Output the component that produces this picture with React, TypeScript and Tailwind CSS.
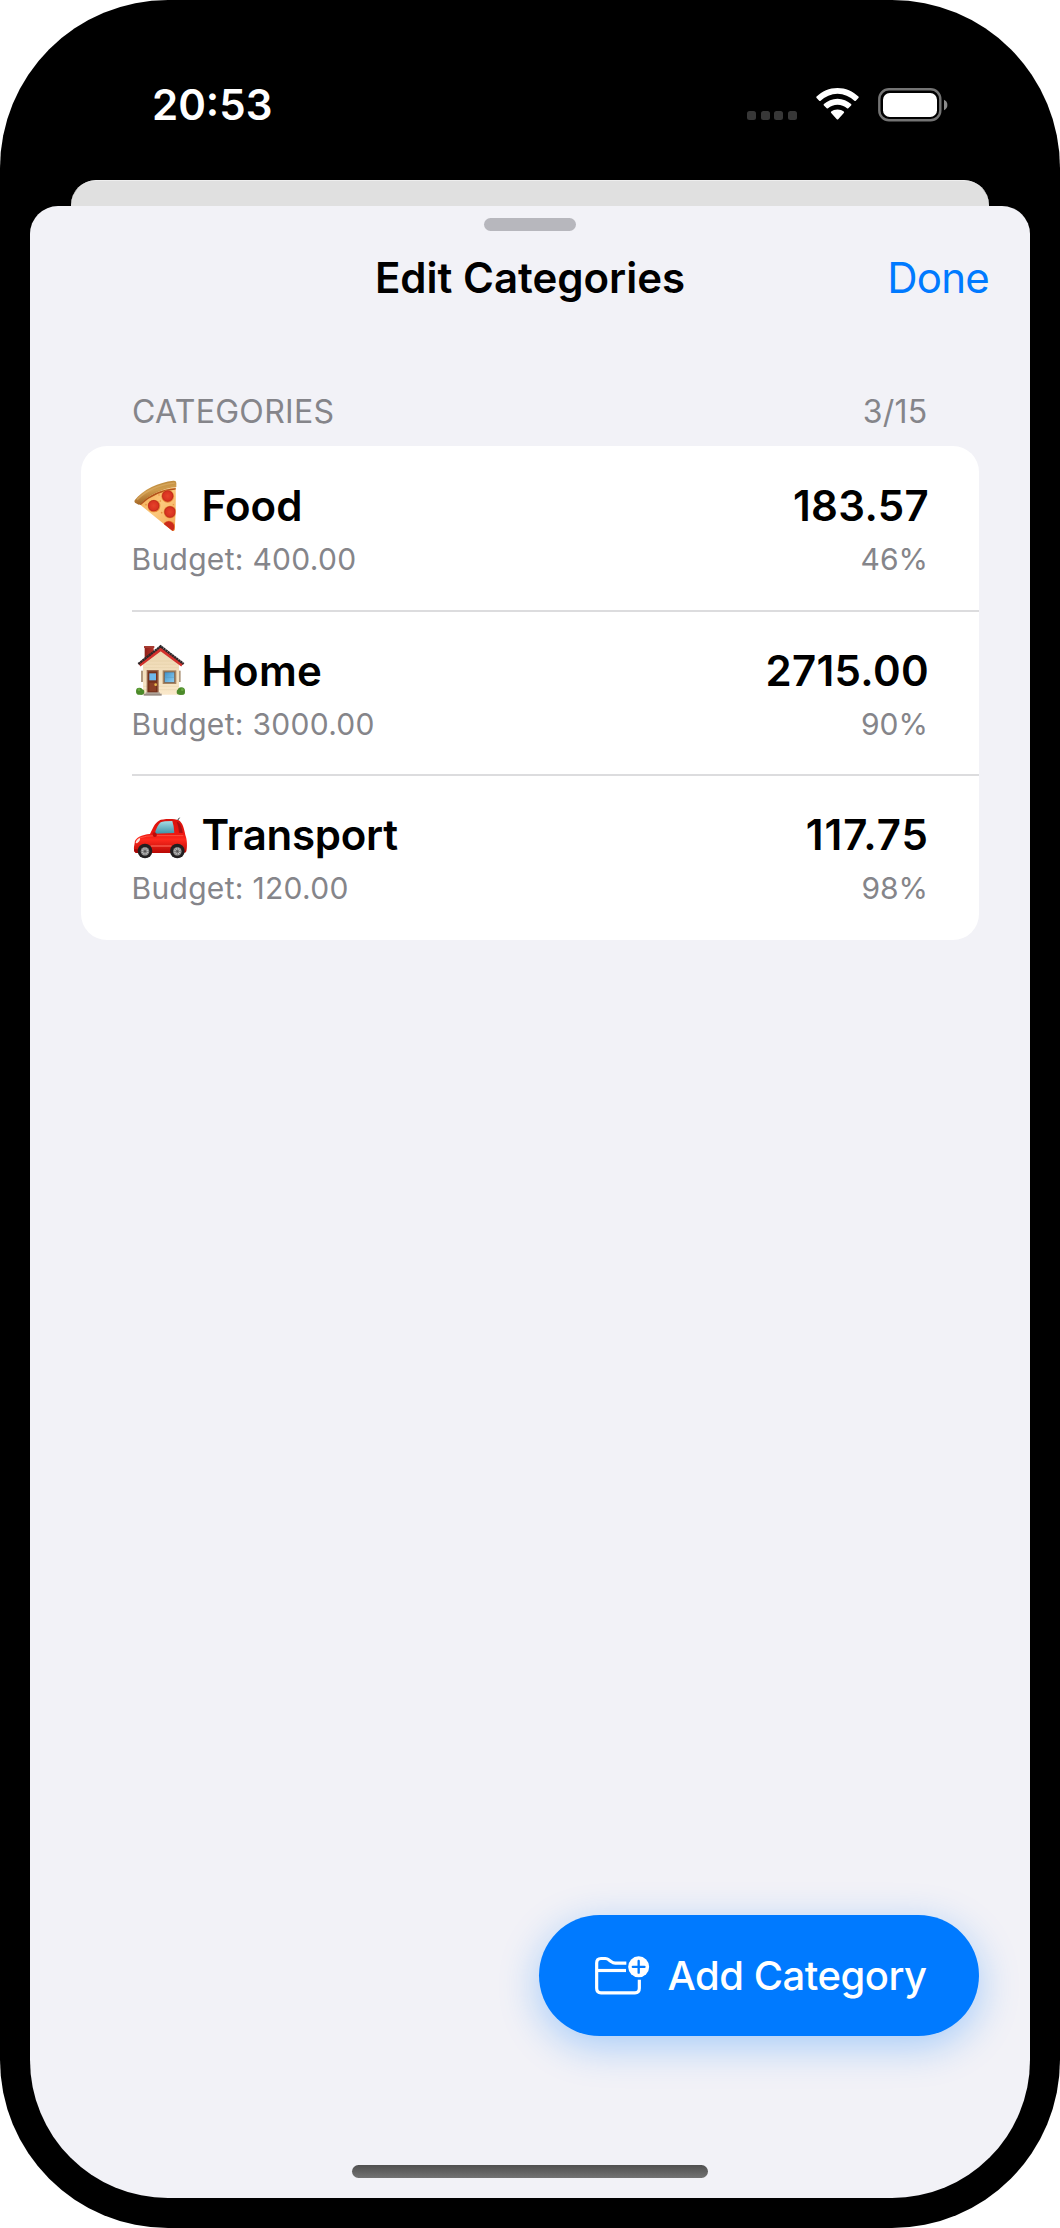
import type { ReactNode } from 'react';

function PizzaIcon() {
  return (
    <svg viewBox="36 24 162 162" className="h-[54px] w-[54px] shrink-0 overflow-visible" aria-hidden="true">
      <defs>
        <linearGradient id="crust" x1="0" y1="0" x2="0.35" y2="1">
          <stop offset="0" stopColor="#a8782c" />
          <stop offset="0.5" stopColor="#cf9b4c" />
          <stop offset="1" stopColor="#9a5a1c" />
        </linearGradient>
        <linearGradient id="cheese" x1="0" y1="0" x2="1" y2="1">
          <stop offset="0" stopColor="#f0a850" />
          <stop offset="0.5" stopColor="#fbc97c" />
          <stop offset="1" stopColor="#f4a656" />
        </linearGradient>
        <radialGradient id="pepperoni">
          <stop offset="0" stopColor="#e5432a" />
          <stop offset="0.75" stopColor="#d93321" />
          <stop offset="1" stopColor="#b5261a" />
        </radialGradient>
        <clipPath id="slice">
          <path d="M58 102C84 76 122 56 167 52C168 96 167 140 164 180Q161 186 155 181Q104 140 58 102Z" />
        </clipPath>
      </defs>
      <path d="M58 102C84 76 122 56 167 52C168 96 167 140 164 180Q161 186 155 181Q104 140 58 102Z" fill="url(#cheese)" />
      <g clipPath="url(#slice)">
        <path d="M60 104C86 78 124 60 170 56" fill="none" stroke="#b3531b" strokeWidth="5" />
        <circle cx="143" cy="79" r="19" fill="#e98435" />
        <circle cx="102" cy="108" r="19" fill="#e98435" />
        <circle cx="150" cy="126" r="19" fill="#e98435" />
        <circle cx="147" cy="171" r="19" fill="#e98435" />
        <circle cx="143" cy="78" r="17" fill="url(#pepperoni)" />
        <circle cx="101" cy="107" r="17" fill="url(#pepperoni)" />
        <circle cx="150" cy="126" r="17" fill="url(#pepperoni)" />
        <circle cx="146" cy="171" r="17" fill="#cb2a1b" />
        <g fill="#e5903e">
          <circle cx="78" cy="104" r="2.5" /><circle cx="121" cy="93" r="2.5" /><circle cx="125" cy="128" r="2.5" /><circle cx="160" cy="104" r="2" /><circle cx="117" cy="75" r="2.5" />
        </g>
      </g>
      <path d="M44 91C68 59 117 36 160 32Q169 31 169 39V51C126 56 86 75 62 102Q57 106 52 102L45 98Q42 95 44 91Z" fill="url(#crust)" />
      <path d="M51 89C79 61 116 44 164 39" fill="none" stroke="#ddb06a" strokeWidth="5" opacity=".6" />
    </svg>
  );
}

function HouseIcon() {
  return (
    <svg viewBox="36 24 162 162" className="h-[54px] w-[54px] shrink-0 overflow-visible" aria-hidden="true">
      <defs>
        <linearGradient id="wall" x1="0" y1="0" x2="0" y2="1">
          <stop offset="0" stopColor="#ecd7b1" />
          <stop offset="1" stopColor="#fae8ca" />
        </linearGradient>
        <linearGradient id="pane" x1="0" y1="0" x2="1" y2="1">
          <stop offset="0" stopColor="#3d8fc8" />
          <stop offset="1" stopColor="#8fd0f4" />
        </linearGradient>
        <linearGradient id="brick" x1="0" y1="0" x2="1" y2="0">
          <stop offset="0" stopColor="#8e2019" />
          <stop offset="1" stopColor="#b8322a" />
        </linearGradient>
      </defs>
      <rect x="63" y="107" width="8" height="34" fill="#b09a80" />
      <rect x="175" y="107" width="7" height="34" fill="#b09a80" />
      <rect x="74" y="35" width="27" height="42" fill="url(#brick)" />
      <rect x="72" y="33" width="31" height="6" rx="1" fill="#a53a30" />
      <path d="M69 88L122 45L177 88V179H69Z" fill="url(#wall)" />
      <g stroke="#dcc49a" strokeWidth="1">
        <path d="M88 78H157M78 88H168M70 98H176M70 154H176M70 164H176" />
      </g>
      <path d="M58 90L122 42L187 90" fill="none" stroke="#d3312c" strokeWidth="11" />
      <path d="M55 87L122 34L191 87" fill="none" stroke="#2b2729" strokeWidth="7" strokeDasharray="7 1" />
      <path d="M116 38L122 31L128 38Z" fill="#2b2729" />
      <rect x="80" y="105" width="36" height="71" fill="#97664b" />
      <rect x="84" y="109" width="28" height="66" fill="#75311c" />
      <rect x="88" y="115" width="20" height="21" fill="#6db7ec" />
      <rect x="88" y="143" width="20" height="26" fill="#8b4027" />
      <circle cx="107" cy="149" r="4" fill="#e8b94a" />
      <rect x="128" y="106" width="41" height="41" fill="#a78460" />
      <rect x="133" y="111" width="31" height="31" fill="url(#pane)" stroke="#725b4a" strokeWidth="2" />
      <path d="M134 127H163" stroke="#5798bd" strokeWidth="1.5" />
      <g fill="#4c8a2a">
        <circle cx="58" cy="168" r="10" /><circle cx="65" cy="171" r="8" /><circle cx="184" cy="168" r="11" /><circle cx="178" cy="171" r="8" />
        <rect x="50" y="168" width="19" height="11" rx="4" /><rect x="177" y="168" width="17" height="11" rx="4" />
      </g>
      <g fill="#69a93e">
        <circle cx="57" cy="164" r="4" /><circle cx="187" cy="164" r="4" />
      </g>
      <rect x="77" y="172" width="43" height="5" fill="#b7ada2" />
      <rect x="71" y="176" width="54" height="6" fill="#988c83" />
    </svg>
  );
}

function CarIcon() {
  return (
    <svg viewBox="36 24 162 162" className="h-[54px] w-[54px] shrink-0 overflow-visible" aria-hidden="true">
      <defs>
        <linearGradient id="paint" x1="0" y1="0" x2="0" y2="1">
          <stop offset="0" stopColor="#d8130c" />
          <stop offset="0.45" stopColor="#ef1710" />
          <stop offset="0.6" stopColor="#ff2a1e" />
          <stop offset="1" stopColor="#b90805" />
        </linearGradient>
        <linearGradient id="glass" x1="0" y1="0" x2="0" y2="1">
          <stop offset="0" stopColor="#a5dce4" />
          <stop offset="1" stopColor="#3f93a8" />
        </linearGradient>
        <radialGradient id="hub">
          <stop offset="0" stopColor="#777" />
          <stop offset="0.6" stopColor="#c4c4c4" />
          <stop offset="1" stopColor="#777" />
        </radialGradient>
      </defs>
      <path d="M171 66L178 57" stroke="#333" strokeWidth="3" strokeLinecap="round" />
      <path d="M44 132C44 116 66 107 90 105C98 88 105 71 117 65C128 59 164 59 176 64C188 70 193 92 196 108C202 122 202 145 199 157Q198 162 191 162H50Q42 161 42 153C41 144 43 139 44 132Z" fill="url(#paint)" />
      <path d="M104 104C109 88 115 75 122 70Q130 66 157 66Q162 80 163 102Z" fill="url(#glass)" />
      <path d="M170 68Q178 69 183 81Q187 92 188 102L177 101Q177 85 170 68Z" fill="#a80e12" />
      <path d="M55 118Q80 109 107 110H190" fill="none" stroke="#ff6b57" strokeWidth="2.5" opacity=".8" />
      <path d="M92 141H155" stroke="#ff7465" strokeWidth="3" />
      <path d="M47 132Q48 121 60 117Q62 125 51 133Z" fill="#f8e2dc" />
      <path d="M98 101Q108 97 110 105Q112 114 104 114Q97 113 98 101Z" fill="#ba0b08" />
      <path d="M42 151H56V161H47Q42 159 42 151Z" fill="#a50604" />
      <circle cx="75" cy="156" r="22" fill="#211f20" />
      <circle cx="172" cy="156" r="22" fill="#211f20" />
      <circle cx="75" cy="157" r="13" fill="url(#hub)" />
      <circle cx="172" cy="157" r="13" fill="url(#hub)" />
      <g stroke="#4a4a4a" strokeWidth="1.5">
        <path d="M75 145V169M63 157H87M67 149L83 165M83 149L67 165M172 145V169M160 157H184M164 149L180 165M180 149L164 165" />
      </g>
    </svg>
  );
}

function WifiIcon() {
  return (
    <svg viewBox="0 0 43 32" className="h-8 w-[43px]" fill="white" aria-hidden="true">
      <path d="M21.5 0C29.7 0 37 3.2 42.4 8.6Q43.1 9.3 42.4 10L39.8 12.7Q39.1 13.4 38.4 12.7A24.3 24.3 0 0 0 4.6 12.7Q3.9 13.4 3.2 12.7L.6 10Q-.1 9.3.6 8.6C6 3.2 13.3 0 21.5 0Z" />
      <path d="M21.5 10.7C26.8 10.7 31.6 12.8 35.1 16.1Q35.8 16.8 35.1 17.5L32.3 20.3Q31.7 20.9 31 20.3A14.2 14.2 0 0 0 12 20.3Q11.3 20.9 10.7 20.3L7.9 17.5Q7.2 16.8 7.9 16.1C11.4 12.8 16.2 10.7 21.5 10.7Z" />
      <path d="M21.5 21.4C24 21.4 26.2 22.2 27.8 23.6Q28.5 24.3 27.8 25L22.2 31.2Q21.5 31.9 20.8 31.2L15.2 25Q14.5 24.3 15.2 23.6C16.8 22.2 19 21.4 21.5 21.4Z" />
    </svg>
  );
}

function BatteryIcon() {
  return (
    <svg viewBox="0 0 70 34" className="h-[34px] w-[70px]" aria-hidden="true">
      <rect x="1.3" y="1.3" width="61" height="31" rx="9.7" fill="none" stroke="#747474" strokeWidth="2.4" />
      <rect x="5" y="5" width="54" height="24" rx="6.8" fill="white" />
      <path d="M66 11.8Q69.4 13.4 69.4 17T66 22.2Z" fill="#8b8b8b" />
    </svg>
  );
}

function FolderPlusIcon() {
  return (
    <svg viewBox="44 63 168 123" className="h-[41px] w-14" fill="none" aria-hidden="true">
      <g stroke="white" strokeWidth="9.5">
        <path d="M141 87.5H108Q101 87.5 96 83L88 77Q84 73.5 78 73.5H65Q52 73.5 52 87V163Q52 176.5 65 176.5H167Q180 176.5 180 163V137" />
        <path d="M52 109.5H140" />
      </g>
      <circle cx="178" cy="98.5" r="31.5" fill="white" />
      <path d="M178 81V116M160.5 98.5H195.5" stroke="#007aff" strokeWidth="7" strokeLinecap="round" />
    </svg>
  );
}

type Category = {
  name: string;
  icon: ReactNode;
  spent: string;
  budget: string;
  percent: string;
  nameTracking: string;
  spentTracking: string;
};

const categories: Category[] = [
  { name: 'Food', icon: <PizzaIcon />, spent: '183.57', budget: '400.00', percent: '46%', nameTracking: 'tracking-[0.1px]', spentTracking: 'tracking-[0.32px]' },
  { name: 'Home', icon: <HouseIcon />, spent: '2715.00', budget: '3000.00', percent: '90%', nameTracking: 'tracking-[0.3px]', spentTracking: 'tracking-[0.35px]' },
  { name: 'Transport', icon: <CarIcon />, spent: '117.75', budget: '120.00', percent: '98%', nameTracking: 'tracking-[-0.25px]', spentTracking: 'tracking-[1px]' },
];

function CategoryRow({ category, divided }: { category: Category; divided: boolean }) {
  return (
    <li className="relative h-[164.5px] pt-8 pr-[50px] pl-[50.5px]">
      {divided && <span className="absolute -top-px right-0 left-[50.5px] h-0.5 bg-[#dcdcde]" />}
      <div className="flex h-14 items-center justify-between text-[42px] leading-[56px] font-semibold text-black">
        <div className="flex items-start">
          {category.icon}
          <span className={`ml-4 ${category.nameTracking}`}>{category.name}</span>
        </div>
        <span className={category.spentTracking}>{category.spent}</span>
      </div>
      <div className="mt-[5px] flex items-center justify-between pr-px text-[30px] leading-10 text-[#85858a]">
        <span className="tracking-[0.3px]">Budget: {category.budget}</span>
        <span>{category.percent}</span>
      </div>
    </li>
  );
}

export default function App() {
  return (
    <div className="h-[2228px] w-[1060px] bg-white font-['Inter',sans-serif]">
      <div className="flex h-full flex-col overflow-hidden rounded-[168px] bg-black px-[30px] pb-[30px]">
        <header className="flex h-[180px] shrink-0 items-start justify-between pt-[77px] pr-[82px] pl-[122px]">
          <time className="text-[42px] leading-[56px] font-semibold text-white">20:53</time>
          <div className="mt-[11px] flex items-start">
            <div className="mt-[23px] mr-[19px] flex gap-[4.6px]">
              {[0, 1, 2, 3].map((dot) => (
                <span key={dot} className="size-[9px] rounded-[2.5px] bg-[#373737]" />
              ))}
            </div>
            <WifiIcon />
            <div className="-mt-[0.5px] ml-[19px]">
              <BatteryIcon />
            </div>
          </div>
        </header>

        <div className="mx-[41px] h-[26px] shrink-0 rounded-t-[25px] border-t border-[#eeeeee] bg-[#e0e0e0]" />

        <main className="flex flex-1 flex-col rounded-t-[28px] rounded-b-[138px] bg-[#f2f2f7]">
          <div className="mx-auto mt-3 h-[13px] w-[92px] shrink-0 rounded-full bg-[#b7b7bd]" />
          <div className="mt-4 grid h-[60px] grid-cols-[1fr_auto_1fr] items-center px-[41px] text-[42px] leading-[60px]">
            <span />
            <h1 className="font-semibold text-black">Edit Categories</h1>
            <button className="mt-px justify-self-end tracking-[-0.77px] text-[#007aff]">Done</button>
          </div>

          <section className="mt-[85px] px-[51px]">
            <div className="flex h-10 items-center justify-between pr-[51.5px] pl-[51px] text-[32px] leading-10 text-[#85858a]">
              <h2 className="tracking-[0.3px]">CATEGORIES</h2>
              <span className="tracking-[0.23px]">3/15</span>
            </div>
            <ul className="mt-[14px] h-[494px] rounded-[26px] bg-white">
              {categories.map((category, index) => (
                <CategoryRow key={category.name} category={category} divided={index > 0} />
              ))}
            </ul>
          </section>

          <div className="mt-auto mr-[51px] mb-[129px] flex justify-end">
            <button className="flex h-[121px] w-[440px] items-center rounded-[60.5px] bg-[#007aff] pl-[55px] text-white shadow-[0_10px_40px_rgba(0,122,255,0.32)]">
              <FolderPlusIcon />
              <span className="ml-[17.5px] text-[40px] leading-[56px] font-medium tracking-[-0.5px] whitespace-nowrap">Add Category</span>
            </button>
          </div>
          <div className="mx-auto mb-5 h-[13px] w-[356px] shrink-0 rounded-full bg-linear-to-b from-[#505050] to-[#737373]" />
        </main>
      </div>
    </div>
  );
}
